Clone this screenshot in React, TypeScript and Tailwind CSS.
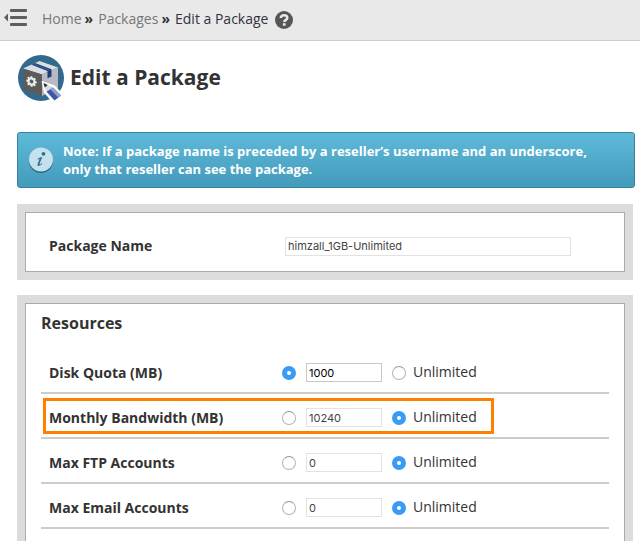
import React, { useState } from 'react';

interface Resource {
  id: string;
  label: string;
  value: string;
  unlimited: boolean;
  highlighted?: boolean;
}

const resources: Resource[] = [
  { id: 'quota', label: 'Disk Quota (MB)', value: '1000', unlimited: false },
  { id: 'bwlimit', label: 'Monthly Bandwidth (MB)', value: '10240', unlimited: true, highlighted: true },
  { id: 'maxftp', label: 'Max FTP Accounts', value: '0', unlimited: true },
  { id: 'maxpop', label: 'Max Email Accounts', value: '0', unlimited: true },
];

const radioClass =
  'size-[14px] shrink-0 appearance-none rounded-full border border-[#b4b4b4] border-t-[#999] bg-white checked:border-[5px] checked:border-[#3a9bf4]';

const MenuIcon = () => (
  <svg width="24" height="18" viewBox="0 0 24 18" fill="#5d5d5d" aria-hidden="true">
    <path d="M0 8.500 4 4.500v8z" />
    <rect x="6" y="0" width="17" height="3" rx="1" />
    <rect x="6" y="7" width="17" height="3" rx="1" />
    <rect x="6" y="14" width="17" height="3" rx="1" />
  </svg>
);

const HelpIcon = () => (
  <svg width="18" height="18" viewBox="0 0 18 18" aria-hidden="true">
    <circle cx="9" cy="9" r="9" fill="#565656" />
    <path d="M5.800 7C5.800 5 7.200 4.300 9 4.300s3.300.9 3.300 2.600c0 2-3 2-3 4.200" fill="none" stroke="#eaeaea" strokeWidth="2.500" />
    <rect x="7.900" y="12.200" width="2.700" height="2.500" fill="#eaeaea" />
  </svg>
);

const PackageIcon = () => (
  <svg width="46" height="46" viewBox="0 0 46 46" aria-hidden="true">
    <circle cx="23" cy="23" r="23" fill="#32698f" />
    <path d="M5 13.500 21.500 6 40 12.500l-16 7z" fill="#dcdde0" />
    <path d="m24 19.500 16-7V33l-16 8z" fill="#b9babf" />
    <path d="m5 13.500 19 6V41L5 34.500z" fill="#5b5b5b" />
    <path d="m13.500 9.700 3.500-1.600 16.500 6.100v7.300l-4 1.700v-7.300z" fill="#1d3f7d" />
    <path d="m15.300 8.900 16.200 6.200" fill="none" stroke="#46639a" strokeWidth="1" />
    <g transform="translate(13.500 26.500) skewY(10)" stroke="#ececec" fill="none">
      <circle r="3" strokeWidth="2.200" />
      <path d="M0-3.200v-2M0 3.200v2M-3.200 0h-2M3.200 0h2M-2.300-2.300l-1.400-1.400M2.300 2.300l1.400 1.400M-2.300 2.300l-1.400 1.400M2.300-2.300l1.400-1.400" strokeWidth="2" />
    </g>
    <path d="m23.500 26 13 4.300 9.500 10-8.500 6.700H34L26 37.500z" fill="#fff" />
    <path d="m25.500 28 9.500 4.500-6.500 4.200z" fill="#d6d7db" />
    <path d="m25.500 28 4.200 2-3 2.600z" fill="#2b2b2b" />
    <path d="m35 32.500 8 8-6.500 5-8-8.800z" fill="#3f57a3" />
    <path d="m35 32.500 8 8-2.700 2.100-8-8.400z" fill="#8fa3c9" />
  </svg>
);

const InfoIcon = () => (
  <svg className="shrink-0" width="26" height="27" viewBox="0 0 26 27" aria-hidden="true">
    <circle cx="13" cy="14" r="12" fill="#2c6785" />
    <circle cx="13" cy="12.500" r="12" fill="#c3e2ed" />
    <circle cx="15.500" cy="6.800" r="1.900" fill="#306f8f" />
    <path d="M9.500 12.300c1.300-1.300 2.700-2.100 4.800-2.200l-2.700 6.700c-.4 1.100.6.900 2.300-.9l.5.500c-1.700 2.400-5.500 4-4.800.7l1.800-4.700c.2-.7-.5-.6-1.500.4z" fill="#306f8f" />
  </svg>
);

const Panel = ({ className = '', children }: { className?: string; children: React.ReactNode }) => (
  <section className={`flex flex-col bg-[#dcdcdc] ${className}`}>{children}</section>
);

const ResourceRow = ({ resource }: { resource: Resource }) => {
  const [unlimited, setUnlimited] = useState(resource.unlimited);
  const [value, setValue] = useState(resource.value);
  return (
    <div
      role="group"
      aria-labelledby={`${resource.id}-label`}
      className="relative flex h-[45px] items-center border-b-2 border-[#ccc] pt-1 pl-2"
    >
      <span id={`${resource.id}-label`} className="w-[233px] shrink-0 font-bold">
        {resource.label}
      </span>
      <input
        type="radio"
        name={resource.id}
        aria-label={`Limit ${resource.label}`}
        checked={!unlimited}
        onChange={() => setUnlimited(false)}
        className={radioClass}
      />
      <input
        type="text"
        aria-labelledby={`${resource.id}-label`}
        value={value}
        onChange={(e) => setValue(e.target.value)}
        className={`mx-[10px] h-[19px] w-[76px] border bg-white px-[2px] font-[Inter,sans-serif] text-[11px] ${
          unlimited ? 'border-[#e2e2e2] text-[#444]' : 'border-[#c8c8c8] text-black'
        }`}
      />
      <label className="flex items-center gap-[7px]">
        <input
          type="radio"
          name={resource.id}
          checked={unlimited}
          onChange={() => setUnlimited(true)}
          className={radioClass}
        />
        <span className="pb-[2px]">Unlimited</span>
      </label>
      {resource.highlighted && (
        <div className="pointer-events-none absolute top-1 left-[2px] h-9 w-[451px] border-3 border-[#ff8000]" />
      )}
    </div>
  );
};

export default function App() {
  const [name, setName] = useState('himzall_1GB-Unlimited');

  return (
    <div className="flex min-h-screen flex-col bg-white font-['Open_Sans',sans-serif] text-[14px] leading-[18px] text-[#333]">
      <header className="flex h-[41px] items-center border-b border-[#ccc] bg-[#e9e9e9] pl-1">
        <button type="button" aria-label="Collapse menu" className="mb-[5px]">
          <MenuIcon />
        </button>
        <nav aria-label="Breadcrumb" className="mb-[2px] ml-[14px] flex items-center gap-[3px]">
          <a href="#home" className="text-[#777]">Home</a>
          <b>»</b>
          <a href="#packages" className="ml-[2px] text-[#777]">Packages</a>
          <b>»</b>
          <span className="ml-[2px] text-[#333344]">Edit a Package</span>
          <a href="#help" aria-label="Help" className="ml-1 pt-[2px]">
            <HelpIcon />
          </a>
        </nav>
      </header>

      <main className="flex flex-1 flex-col pt-[14px] pl-[17px]">
        <div className="flex items-center gap-[6px] pl-px">
          <PackageIcon />
          <h1 className="pb-[2px] text-[21px] leading-7 font-bold">Edit a Package</h1>
        </div>

        <div className="mt-[31px] mr-[5px] flex items-center gap-[9px] rounded-[3px] border border-[#3583a0] bg-linear-to-b from-[#5eb9d8] to-[#439bbb] py-[9px] pl-[10px] text-[13px] font-bold text-white">
          <InfoIcon />
          <p className="max-w-[540px]">
            Note: If a package name is preceded by a reseller’s username and an underscore, only that reseller can see the package.
          </p>
        </div>

        <Panel className="mt-4 mr-[7px] p-2">
          <div className="flex h-[60px] items-center border border-[#aaa] bg-white pt-2 pl-[23px]">
            <label htmlFor="package-name" className="w-[236px] shrink-0 font-bold">
              Package Name
            </label>
            <input
              id="package-name"
              type="text"
              value={name}
              onChange={(e) => setName(e.target.value)}
              className="h-[19px] w-[286px] border border-[#e2e2e2] bg-white px-[2px] font-[Inter,sans-serif] text-[11px] text-[#444]"
            />
          </div>
        </Panel>

        <Panel className="mt-[15px] mr-[7px] flex-1 px-2 pt-2">
          <div className="flex-1 border border-b-0 border-[#aaa] bg-white px-[15px] pt-[10px]">
            <h2 className="mb-[17px] text-[16px] leading-[18px] font-bold">Resources</h2>
            {resources.map((resource) => (
              <ResourceRow key={resource.id} resource={resource} />
            ))}
          </div>
        </Panel>
      </main>
    </div>
  );
}
